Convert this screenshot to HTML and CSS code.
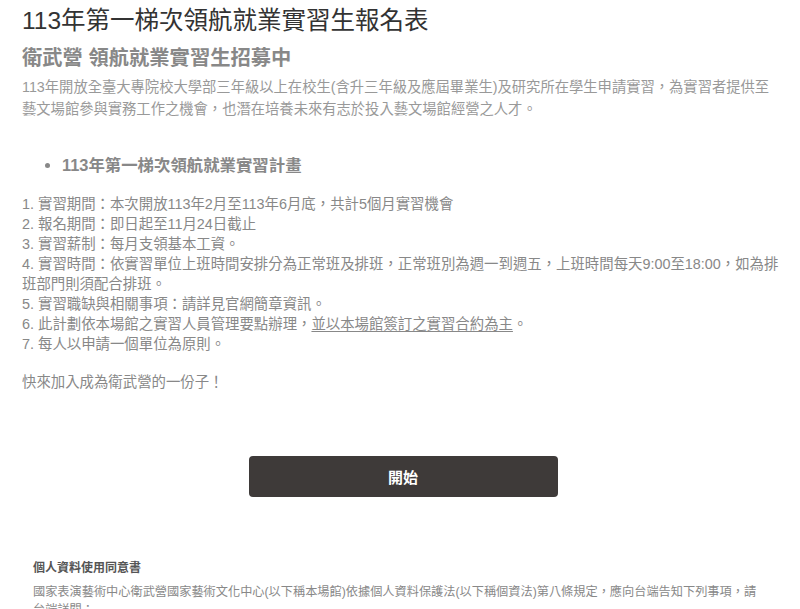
FILE: index.html
```html
<!DOCTYPE html>
<html>

	<head>
		<meta charset="utf-8" />
		<title>113年第一梯次領航就業實習生報名表</title>
		<link rel="stylesheet" href="styles.css">
	</head>

	<body>
		<div id="page">
			<h1 class="title">113年第一梯次領航就業實習生報名表</h1>
			<h2 class="subtitle">衛武營 領航就業實習生招募中</h2>
			<p class="intro">113年開放全臺大專院校大學部三年級以上在校生(含升三年級及應屆畢業生)及研究所在學生申請實習，為實習者提供至藝文場館參與實務工作之機會，也潛在培養未來有志於投入藝文場館經營之人才。</p>

			<ul class="plan">
				<li>113年第一梯次領航就業實習計畫</li>
			</ul>

			<div class="rules">
				<p>1. 實習期間：本次開放113年2月至113年6月底，共計5個月實習機會</p>
				<p>2. 報名期間：即日起至11月24日截止</p>
				<p>3. 實習薪制：每月支領基本工資。</p>
				<p>4. 實習時間：依實習單位上班時間安排分為正常班及排班，正常班別為週一到週五，上班時間每天9:00至18:00，如為排班部門則須配合排班。</p>
				<p>5. 實習職缺與相關事項：請詳見官網簡章資訊。</p>
				<p>6. 此計劃依本場館之實習人員管理要點辦理，<u>並以本場館簽訂之實習合約為主</u>。</p>
				<p>7. 每人以申請一個單位為原則。</p>
				<p class="join">快來加入成為衛武營的一份子！</p>
			</div>

			<div class="start">
				<button class="start_btn" type="button">開始</button>
			</div>

			<div class="consent">
				<h3>個人資料使用同意書</h3>
				<p>國家表演藝術中心衛武營國家藝術文化中心(以下稱本場館)依據個人資料保護法(以下稱個資法)第八條規定，應向台端告知下列事項，請台端詳閱：</p>
			</div>
		</div>
	</body>

</html>
```

FILE: styles.css
```css
* {
	margin: 0;
	padding: 0;
}

body {
	font-family: "Liberation Sans", "Noto Sans CJK TC", sans-serif;
	color: #888;
	background: #fff;
}

#page {
	padding: 4px 20px 0 22px;
}

.title {
	font-size: 24.5px;
	font-weight: normal;
	line-height: 34px;
	color: #333;
}

.subtitle {
	margin-top: 6px;
	font-size: 20.3px;
	font-weight: bold;
	line-height: 28px;
	color: #888;
}

.intro {
	margin-top: 4px;
	font-size: 14.3px;
	line-height: 22px;
	color: #999;
}

.plan {
	margin: 33px 0 0 40px;
	list-style: disc;
}

.plan li {
	font-size: 16.4px;
	font-weight: bold;
	line-height: 24px;
	color: #888;
}

.rules {
	margin-top: 17px;
	font-size: 14.4px;
	line-height: 20px;
	color: #888;
}

.rules u {
	text-underline-offset: 2px;
}

.rules .join {
	margin-top: 18px;
}

.start {
	display: flex;
	justify-content: center;
	margin-top: 64px;
	padding-left: 4px;
}

.start_btn {
	width: 309px;
	height: 41px;
	border: none;
	border-radius: 4px;
	background-color: #3e3a39;
	color: #fff;
	font-family: "Liberation Sans", "Noto Sans CJK TC", sans-serif;
	font-size: 15px;
	font-weight: bold;
}

.consent {
	margin: 61px 15px 0 11px;
	font-size: 12.2px;
	line-height: 20px;
}

.consent h3 {
	font-size: 12px;
	font-weight: bold;
	color: #555;
	margin-bottom: 5px;
}

.consent p {
	color: #888;
	line-height: 18px;
}
```
